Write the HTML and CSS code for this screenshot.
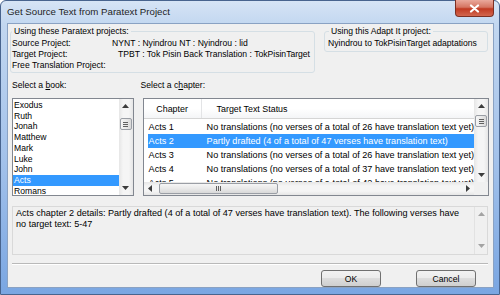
FILE: index.html
```html
<!DOCTYPE html>
<html lang="en">
<head>
  <meta charset="UTF-8" />
  <title>Get Source Text from Paratext Project</title>
  <link rel="stylesheet" href="styles.css">
</head>
<body>

  <div class="window">
    <!-- Title bar -->
    <div class="titlebar">
      <span class="title">Get Source Text from Paratext Project</span>
      <div class="close-btn">
        <svg width="11" height="9" viewBox="0 0 11 9"><path d="M2 1.5L9 7.5M9 1.5L2 7.5" stroke="#fff" stroke-width="2.2" stroke-linecap="round"/></svg>
      </div>
    </div>

    <div class="client">
      <!-- Projects -->
      <div class="projects-row">
        <fieldset class="group paratext-group">
          <legend>Using these Paratext projects:</legend>
          <div class="proj-line"><span class="proj-label">Source Project:</span><span class="proj-value">NYNT : Nyindrou NT : Nyindrou : lid</span></div>
          <div class="proj-line"><span class="proj-label">Target Project:</span><span class="proj-value target">TPBT : Tok Pisin Back Translation : TokPisinTarget</span></div>
          <div class="proj-line"><span class="proj-label">Free Translation Project:</span><span class="proj-value"></span></div>
        </fieldset>
        <fieldset class="group adapt-group">
          <legend>Using this Adapt It project:</legend>
          <div class="adapt-name">Nyindrou to TokPisinTarget adaptations</div>
        </fieldset>
      </div>

      <!-- Book / chapter pickers -->
      <div class="pick-row">
        <div class="book-col">
          <div class="pick-label">Select a <u>b</u>ook:</div>
          <div class="listbox">
            <ul class="book-list">
              <li>Exodus</li>
              <li>Ruth</li>
              <li>Jonah</li>
              <li>Matthew</li>
              <li>Mark</li>
              <li>Luke</li>
              <li>John</li>
              <li class="selected">Acts</li>
              <li>Romans</li>
            </ul>
            <div class="vscroll">
              <div class="sb-btn"><svg width="7" height="4" viewBox="0 0 7 4"><path d="M0 4L3.5 0L7 4Z"/></svg></div>
              <div class="sb-thumb book-thumb"><span class="grip-h"></span></div>
              <div class="sb-btn sb-end"><svg width="7" height="4" viewBox="0 0 7 4"><path d="M0 0L3.5 4L7 0Z"/></svg></div>
            </div>
          </div>
        </div>

        <div class="chapter-col">
          <div class="pick-label">Select a c<u>h</u>apter:</div>
          <div class="listview">
            <div class="lv-main">
              <div class="lv-body">
                <div class="lv-header">
                  <div class="col-chapter">Chapter</div>
                  <div class="col-status">Target Text Status</div>
                </div>
                <div class="lv-rows">
                  <div class="lv-row"><span class="cell-chapter">Acts 1</span><span class="cell-status">No translations (no verses of a total of 26 have translation text yet)</span></div>
                  <div class="lv-row selected"><span class="cell-chapter">Acts 2</span><span class="cell-status">Partly drafted (4 of a total of 47 verses have translation text)</span></div>
                  <div class="lv-row"><span class="cell-chapter">Acts 3</span><span class="cell-status">No translations (no verses of a total of 26 have translation text yet)</span></div>
                  <div class="lv-row"><span class="cell-chapter">Acts 4</span><span class="cell-status">No translations (no verses of a total of 37 have translation text yet)</span></div>
                  <div class="lv-row"><span class="cell-chapter">Acts 5</span><span class="cell-status">No translations (no verses of a total of 42 have translation text yet)</span></div>
                </div>
              </div>
              <div class="vscroll lv-vscroll">
                <div class="sb-btn"><svg width="7" height="4" viewBox="0 0 7 4"><path d="M0 4L3.5 0L7 4Z"/></svg></div>
                <div class="sb-thumb lv-thumb"><span class="grip-h"></span></div>
                <div class="sb-btn sb-end"><svg width="7" height="4" viewBox="0 0 7 4"><path d="M0 0L3.5 4L7 0Z"/></svg></div>
              </div>
            </div>
            <div class="lv-bottom">
              <div class="hscroll">
                <div class="sb-btn-h"><svg width="4" height="7" viewBox="0 0 4 7"><path d="M4 0L0 3.5L4 7Z"/></svg></div>
                <div class="sb-thumb-h"><span class="grip-v"></span></div>
                <div class="sb-btn-h sb-end-h"><svg width="4" height="7" viewBox="0 0 4 7"><path d="M0 0L4 3.5L0 7Z"/></svg></div>
              </div>
              <div class="sb-corner"></div>
            </div>
          </div>
        </div>
      </div>

      <!-- Chapter details -->
      <div class="details">
        <div class="details-text">Acts chapter 2 details: Partly drafted (4 of a total of 47 verses have translation text). The following verses have<br>no target text: 5-47</div>
        <div class="vscroll details-scroll">
          <div class="sb-btn"><svg width="7" height="4" viewBox="0 0 7 4"><path d="M0 4L3.5 0L7 4Z"/></svg></div>
          <div class="sb-btn sb-end"><svg width="7" height="4" viewBox="0 0 7 4"><path d="M0 0L3.5 4L7 0Z"/></svg></div>
        </div>
      </div>

      <div class="separator"></div>

      <div class="buttons">
        <button class="dlg-btn">OK</button>
        <button class="dlg-btn">Cancel</button>
      </div>
    </div>
  </div>

</body>
</html>
```

FILE: styles.css
```css
* {
  box-sizing: border-box;
}

body {
  margin: 0;
  font-family: 'Liberation Sans', Arial, sans-serif;
  font-size: 8.6px;
  color: #000;
}

/* Window frame */
.window {
  width: 500px;
  height: 295px;
  display: flex;
  flex-direction: column;
  padding: 0 5px 6px 6px;
  background: linear-gradient(#d6e4f5, #c2d7f0 24px, #a2c1ea 55%, #7aa6e2);
  border: 1px solid #48648e;
  border-radius: 6px 6px 0 0;
}

.titlebar {
  height: 22px;
  display: flex;
  align-items: flex-start;
}

.title {
  margin-top: 5px;
  font-size: 9.7px;
  line-height: 12px;
  color: #1e1e1e;
}

.close-btn {
  margin-left: auto;
  margin-top: -1px;
  width: 39px;
  height: 17px;
  display: flex;
  align-items: center;
  justify-content: center;
  background: linear-gradient(#eaa99c, #d57562 45%, #c13a22 55%, #d2664e);
  border: 1px solid #7c2f22;
  border-top: none;
  border-radius: 0 0 4px 4px;
}

/* Client area */
.client {
  flex: 1;
  display: flex;
  flex-direction: column;
  background: #f0f0f0;
  border: 1px solid #8aa2c3;
  padding: 0 4px 0 3px;
  overflow: hidden;
}

.projects-row {
  display: flex;
  align-items: flex-start;
  margin-top: 2px;
}

.group {
  margin: 0;
  border: 1px solid #d5dfe5;
  border-radius: 3px;
  min-width: 0;
}

.group legend {
  padding: 0 2px;
  line-height: 11px;
}

.paratext-group {
  width: 305px;
  margin-left: -1px;
  padding: 1px 0 1px 1px;
}

.proj-line {
  display: flex;
  line-height: 11px;
  white-space: nowrap;
}

.proj-label {
  width: 100px;
}

.proj-value.target {
  padding-left: 6px;
}

.adapt-group {
  width: 164px;
  margin-left: auto;
  margin-right: 1px;
  padding: 1px 0 2px 3px;
}

.adapt-group legend {
  margin-left: 1px;
}

.adapt-name {
  line-height: 11px;
  white-space: nowrap;
}

/* Pickers */
.pick-row {
  display: flex;
  gap: 9px;
  margin-top: 7px;
}

.pick-label {
  line-height: 11px;
  margin-bottom: 7px;
}

.book-col {
  width: 123px;
  margin-left: 1px;
}

.chapter-col {
  flex: 1;
}

.chapter-col .pick-label {
  margin-left: -2px;
}

.listbox,
.listview {
  height: 98px;
  background: #fff;
  border: 1px solid #828790;
}

.listbox {
  display: flex;
}

.book-list {
  flex: 1;
  list-style: none;
  margin: 0;
  padding: 1px 0 0;
}

.book-list li {
  line-height: 10.7px;
  padding-left: 1px;
}

.selected {
  background: #3399ff;
  color: #fff;
}

/* Scrollbars */
.vscroll {
  width: 14px;
  display: flex;
  flex-direction: column;
  background: linear-gradient(to right, #e6e6e6, #f5f5f5 30%, #f5f5f5 70%, #e6e6e6);
}

.sb-btn {
  height: 14px;
  display: flex;
  align-items: center;
  justify-content: center;
  fill: #3c3c3c;
}

.sb-end {
  margin-top: auto;
}

.sb-thumb {
  height: 12px;
  margin: 0 1px;
  display: flex;
  align-items: center;
  justify-content: center;
  border: 1px solid #9a9ea5;
  border-radius: 2px;
  background: linear-gradient(to right, #f6f6f6, #e9e9e9 50%, #d9d9d9);
}

.book-thumb {
  margin-top: 5px;
}

.lv-thumb {
  margin-top: 2px;
}

.grip-h {
  width: 5px;
  height: 5px;
  background: repeating-linear-gradient(#606060 0 1px, transparent 1px 2px);
}

.grip-v {
  width: 5px;
  height: 5px;
  background: repeating-linear-gradient(to right, #606060 0 1px, transparent 1px 2px);
}

/* Chapter list view */
.listview {
  display: flex;
  flex-direction: column;
}

.lv-main {
  height: 83px;
  display: flex;
}

.lv-body {
  flex: 1;
  min-width: 0;
  overflow: hidden;
}

.lv-header {
  height: 20px;
  display: flex;
  align-items: center;
  font-size: 8.9px;
  background: linear-gradient(#fff, #fff 50%, #f4f5f7);
  border-bottom: 1px solid #d5d5d5;
}

.col-chapter {
  width: 58px;
  height: 100%;
  display: flex;
  align-items: center;
  justify-content: center;
  border-right: 1px solid #e3e4e6;
}

.col-status {
  padding-left: 15px;
}

.lv-rows {
  padding-top: 1px;
}

.lv-row {
  display: flex;
  height: 14px;
  line-height: 14px;
  margin-left: 4px;
  font-size: 9.1px;
  white-space: nowrap;
}

.cell-chapter {
  width: 54px;
  padding-left: 1px;
  flex-shrink: 0;
}

.cell-status {
  padding-left: 5px;
}

.lv-vscroll {
  height: 100%;
}

.lv-bottom {
  flex: 1;
  display: flex;
}

.hscroll {
  flex: 1;
  display: flex;
  align-items: center;
  background: linear-gradient(#e6e6e6, #f5f5f5 30%, #f5f5f5 70%, #e6e6e6);
}

.sb-btn-h {
  width: 13px;
  height: 100%;
  display: flex;
  align-items: center;
  justify-content: center;
  fill: #3c3c3c;
}

.sb-end-h {
  margin-left: auto;
}

.sb-thumb-h {
  width: 119px;
  height: 11px;
  margin-left: 2px;
  display: flex;
  align-items: center;
  justify-content: center;
  border: 1px solid #9a9ea5;
  border-radius: 2px;
  background: linear-gradient(#f6f6f6, #e9e9e9 50%, #d9d9d9);
}

.sb-corner {
  width: 14px;
  background: #f0f0f0;
}

/* Details */
.details {
  height: 49px;
  margin: 10px 1px 0 1px;
  display: flex;
  border: 1px solid #d9d9d9;
  background: #f0f0f0;
}

.details-text {
  flex: 1;
  padding: 1px 3px;
  font-size: 9.1px;
  line-height: 11px;
  white-space: nowrap;
  overflow: hidden;
}

.details-scroll {
  width: 13px;
  background: #f0f0f0;
  border-left: 1px solid #e2e2e2;
  padding: 0 0 1px;
}

.details-scroll .sb-btn {
  fill: #a3a3a3;
}

.separator {
  margin: 8px 1px 0 1px;
  border-top: 1px solid #b9b9b9;
  border-bottom: 1px solid #fff;
}

.buttons {
  display: flex;
  justify-content: flex-end;
  gap: 35px;
  margin: 5px 13px 0 0;
}

.dlg-btn {
  width: 60px;
  height: 17px;
  padding: 0;
  font-family: 'Liberation Sans', Arial, sans-serif;
  font-size: 8.6px;
  color: #000;
  border: 1px solid #707070;
  border-radius: 3px;
  background: linear-gradient(#f2f2f2, #ebebeb 50%, #dddddd 50%, #cfcfcf);
}
```
